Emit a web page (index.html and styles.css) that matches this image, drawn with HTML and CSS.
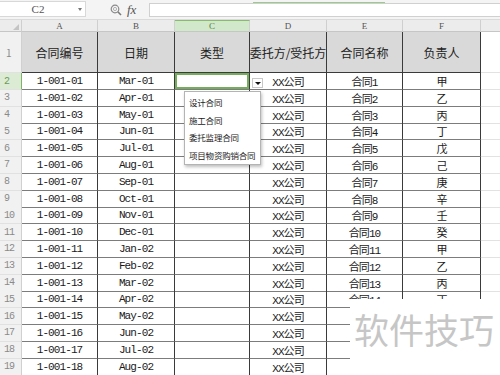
FILE: index.html
```html
<!DOCTYPE html>
<html lang="zh">
<head>
    <meta charset="UTF-8">
    <title>合同登记表</title>
    <link rel="stylesheet" href="styles.css">
</head>
<body>
    <div class="formula-bar">
        <div class="name-box"><span class="name">C2</span><span class="caret"></span></div>
        <div class="fx-tools">
            <svg class="zoom-icon" width="12" height="12" viewBox="0 0 12 12">
                <circle cx="5" cy="5" r="3.8" fill="none" stroke="#8a8a8a" stroke-width="1.2"/>
                <circle cx="5" cy="5" r="1.6" fill="none" stroke="#a0a0a0" stroke-width="0.8"/>
                <path d="M7.8 7.8 L11 11" stroke="#7a7a7a" stroke-width="1.6"/>
            </svg>
            <span class="fx">fx</span>
        </div>
        <div class="fx-input"><div class="fx-mark"></div></div>
    </div>

    <div class="sheet">
        <div class="row col-heads">
            <div class="corner"><span class="tri"></span></div>
            <div>A</div><div>B</div><div class="on">C</div><div>D</div><div>E</div><div>F</div><div class="x"></div>
        </div>
        <div class="row head">
            <div class="rh">1</div>
            <div>合同编号</div><div>日期</div><div>类型</div><div>委托方/受托方</div><div>合同名称</div><div>负责人</div><div class="x"></div>
        </div>
        <div class="row">
            <div class="rh on">2</div>
            <div>1-001-01</div><div>Mar-01</div>
            <div class="sel">
                <span class="dd-btn"></span>
                <ul class="dd-list">
                    <li>设计合同</li>
                    <li>施工合同</li>
                    <li>委托监理合同</li>
                    <li>项目物资购销合同</li>
                </ul>
            </div>
            <div>XX公司</div><div>合同1</div><div>甲</div><div class="x"></div>
        </div>
        <div class="row"><div class="rh">3</div><div>1-001-02</div><div>Apr-01</div><div></div><div>XX公司</div><div>合同2</div><div>乙</div><div class="x"></div></div>
        <div class="row"><div class="rh">4</div><div>1-001-03</div><div>May-01</div><div></div><div>XX公司</div><div>合同3</div><div>丙</div><div class="x"></div></div>
        <div class="row"><div class="rh">5</div><div>1-001-04</div><div>Jun-01</div><div></div><div>XX公司</div><div>合同4</div><div>丁</div><div class="x"></div></div>
        <div class="row"><div class="rh">6</div><div>1-001-05</div><div>Jul-01</div><div></div><div>XX公司</div><div>合同5</div><div>戊</div><div class="x"></div></div>
        <div class="row"><div class="rh">7</div><div>1-001-06</div><div>Aug-01</div><div></div><div>XX公司</div><div>合同6</div><div>己</div><div class="x"></div></div>
        <div class="row"><div class="rh">8</div><div>1-001-07</div><div>Sep-01</div><div></div><div>XX公司</div><div>合同7</div><div>庚</div><div class="x"></div></div>
        <div class="row"><div class="rh">9</div><div>1-001-08</div><div>Oct-01</div><div></div><div>XX公司</div><div>合同8</div><div>辛</div><div class="x"></div></div>
        <div class="row"><div class="rh">10</div><div>1-001-09</div><div>Nov-01</div><div></div><div>XX公司</div><div>合同9</div><div>壬</div><div class="x"></div></div>
        <div class="row"><div class="rh">11</div><div>1-001-10</div><div>Dec-01</div><div></div><div>XX公司</div><div>合同10</div><div>癸</div><div class="x"></div></div>
        <div class="row"><div class="rh">12</div><div>1-001-11</div><div>Jan-02</div><div></div><div>XX公司</div><div>合同11</div><div>甲</div><div class="x"></div></div>
        <div class="row"><div class="rh">13</div><div>1-001-12</div><div>Feb-02</div><div></div><div>XX公司</div><div>合同12</div><div>乙</div><div class="x"></div></div>
        <div class="row"><div class="rh">14</div><div>1-001-13</div><div>Mar-02</div><div></div><div>XX公司</div><div>合同13</div><div>丙</div><div class="x"></div></div>
        <div class="row"><div class="rh">15</div><div>1-001-14</div><div>Apr-02</div><div></div><div>XX公司</div><div>合同14</div><div>丁</div><div class="x"></div></div>
        <div class="row"><div class="rh">16</div><div>1-001-15</div><div>May-02</div><div></div><div>XX公司</div><div></div><div></div><div class="x"></div></div>
        <div class="row"><div class="rh">17</div><div>1-001-16</div><div>Jun-02</div><div></div><div>XX公司</div><div></div><div></div><div class="x"></div></div>
        <div class="row"><div class="rh">18</div><div>1-001-17</div><div>Jul-02</div><div></div><div>XX公司</div><div></div><div></div><div class="x"></div></div>
        <div class="row"><div class="rh">19</div><div>1-001-18</div><div>Aug-02</div><div></div><div>XX公司</div><div></div><div></div><div class="x"></div></div>
    </div>

    <div class="watermark">软件技巧</div>
</body>
</html>
```

FILE: styles.css
```css
* {
    box-sizing: border-box;
}
body {
    margin: 0;
    width: 500px;
    height: 375px;
    overflow: hidden;
    background-color: #fff;
    font-family: "Noto Sans CJK SC", sans-serif;
    color: #1a1a1a;
}

/* formula bar */
.formula-bar {
    display: flex;
    height: 20px;
    background-color: #f4f4f4;
    border-bottom: 1px solid #dadada;
}
.name-box {
    position: relative;
    width: 86px;
    margin: 1px 0 2px;
    background-color: #fff;
    border: 1px solid #d8d8d8;
    border-left: none;
    display: flex;
    align-items: center;
}
.name {
    width: 76px;
    text-align: center;
    font-family: "Liberation Serif", serif;
    font-size: 11px;
    color: #555;
}
.caret {
    width: 0;
    height: 0;
    border-left: 2px solid transparent;
    border-right: 2px solid transparent;
    border-top: 3px solid #777;
    margin-left: 2px;
}
.fx-tools {
    width: 63px;
    display: flex;
    align-items: center;
    padding-left: 24px;
    gap: 5px;
}
.fx {
    font-family: "Liberation Serif", serif;
    font-style: italic;
    font-size: 13px;
    color: #555;
}
.fx-input {
    flex: 1;
    margin: 3px 0 2px;
    background-color: #fff;
    border: 1px solid #d0d0d0;
    border-right: none;
}
.fx-mark {
    width: 132px;
    height: 1px;
    margin: -2px 0 0 103px;
    background-color: #9cc98c;
}

/* sheet grid */
.row {
    display: grid;
    grid-template-columns: 22px 76px 77px 75px 77px 76px 78px 1fr;
    height: 16.8px;
}
.row > div {
    display: flex;
    align-items: center;
    justify-content: center;
    border-right: 1px solid #3a3a3a;
    border-bottom: 1px solid #7c7c7c;
    font-family: "Liberation Mono", "Noto Sans CJK SC", monospace;
    font-size: 11px;
    letter-spacing: -0.9px;
    white-space: nowrap;
}
.row > .x {
    border-right: none;
    border-bottom: 1px solid #e2e2e2;
}
.row > .rh {
    justify-content: flex-start;
    padding-left: 4px;
    background-color: #f1f1f1;
    border-right: 1px solid #d0d0d0;
    border-bottom: 1px solid #e1e1e1;
    color: #8a8a8a;
    font-size: 10px;
}
.row > .rh.on {
    background-color: #dcecd4;
    color: #6d9a5c;
    border-right: 1px solid #7fb36a;
}

.col-heads {
    height: 12px;
}
.col-heads > div {
    background-color: #ececec;
    border-right: 1px solid #cfcfcf;
    border-bottom: 1px solid #c6c6c6;
    font-family: "Liberation Serif", serif;
    font-size: 9px;
    letter-spacing: 0;
    color: #555;
}
.col-heads > .on {
    background-color: #d2e8ca;
    border-top: 1px solid #86bb70;
    color: #4f7f3e;
}
.col-heads > .x {
    background-color: #ececec;
    border-bottom: 1px solid #c6c6c6;
}
.corner {
    position: relative;
}
.tri {
    position: absolute;
    right: 2px;
    bottom: 1px;
    width: 0;
    height: 0;
    border-left: 6px solid transparent;
    border-bottom: 6px solid #c4c4c4;
}

.head {
    height: 41px;
}
.head > div {
    background-color: #d9d9d9;
    border-bottom: 1px solid #3a3a3a;
    font-family: "Noto Sans CJK SC", sans-serif;
    font-size: 12px;
    letter-spacing: 0;
    color: #222;
}
.head > .rh {
    padding-left: 6px;
}
.head > .x {
    background-color: #fff;
}

/* selected cell with its validation list */
.row > .sel {
    position: relative;
    box-shadow: inset 0 0 0 2px #74ad5c;
}
.dd-btn {
    position: absolute;
    left: 77px;
    top: 5px;
    width: 11px;
    height: 10px;
    background-color: #fff;
    border: 1px solid #c8c8c8;
}
.dd-btn::after {
    content: "";
    position: absolute;
    left: 2px;
    top: 3px;
    border-left: 3px solid transparent;
    border-right: 3px solid transparent;
    border-top: 3px solid #111;
}
.dd-list {
    position: absolute;
    left: 9px;
    top: 18px;
    width: 77px;
    height: 74px;
    margin: 0;
    padding: 2px 0 0 4px;
    list-style: none;
    background-color: #fff;
    border: 1px solid #b4b4b4;
    box-shadow: 1px 2px 3px rgba(0, 0, 0, 0.25);
    z-index: 5;
}
.dd-list li {
    height: 17.5px;
    line-height: 17.5px;
    font-family: "Noto Sans CJK SC", sans-serif;
    font-size: 8.5px;
    letter-spacing: -0.2px;
    color: #222;
    text-align: left;
}

.watermark {
    position: absolute;
    left: 350px;
    top: 299px;
    width: 150px;
    height: 76px;
    padding: 11px 0 0 4px;
    background-color: #fff;
    font-size: 35px;
    line-height: 1.1;
    color: #c6c6c6;
    white-space: nowrap;
}
```
